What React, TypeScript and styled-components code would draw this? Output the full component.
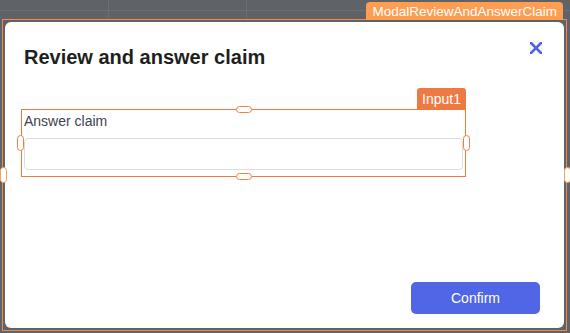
import React from "react";
import styled, { createGlobalStyle } from "styled-components";

const Global = createGlobalStyle`
  html, body { margin: 0; padding: 0; background: #5f6266; }
  * { box-sizing: border-box; }
`;

const Canvas = styled.div`
  width: 570px;
  height: 333px;
  overflow: hidden;
  padding: 19px 0 0 2px;
  font-family: "Liberation Sans", Arial, sans-serif;
  background-color: #5f6266;
  background-image:
    linear-gradient(#6b6e72, #6b6e72),
    linear-gradient(#6b6e72, #6b6e72),
    linear-gradient(#6b6e72, #6b6e72);
  background-size: 100% 1px, 1px 20px, 1px 20px;
  background-position: 0 10px, 108px 0, 246px 0;
  background-repeat: no-repeat;
`;

const Frame = styled.div`
  position: relative;
  width: 565px;
  height: 312px;
  border: 1px solid #f08a45;
  padding: 2px;
`;

const FrameTag = styled.div`
  position: absolute;
  right: 3px;
  bottom: 100%;
  height: 18px;
  line-height: 19px;
  padding: 0 6px;
  background: #ff9d50;
  color: #ffffff;
  font-size: 13.5px;
  border-radius: 4px 4px 0 0;
  white-space: nowrap;
`;

const Handle = styled.span<{ $side: "left" | "right" | "top" | "bottom"; $off: number }>`
  position: absolute;
  z-index: 2;
  background: #ffffff;
  border: 1.5px solid #f0803f;
  border-radius: 4px;
  ${(p) =>
    p.$side === "left" || p.$side === "right"
      ? `width: 7px; height: 16px; top: 50%; transform: translateY(-50%); ${p.$side}: ${p.$off}px;`
      : `width: 16px; height: 7px; left: 50%; transform: translateX(-50%); ${p.$side}: ${p.$off}px;`}
`;

const FrameHandle = styled(Handle)`
  border-color: #f6a160;
`;

const Modal = styled.div`
  width: 100%;
  height: 100%;
  background: #ffffff;
  border-radius: 6px;
  display: flex;
  flex-direction: column;
`;

const Header = styled.div`
  display: flex;
  align-items: flex-start;
  justify-content: space-between;
  padding: 23px 22px 0 19px;
`;

const Title = styled.h2`
  margin: 0;
  font-size: 20px;
  line-height: 24px;
  font-weight: 700;
  color: #1e1f21;
`;

const Close = styled.button`
  border: 0;
  background: none;
  padding: 0;
  margin-top: -3px;
  width: 12px;
  height: 12px;
  display: flex;
  cursor: pointer;
`;

const Body = styled.div`
  padding: 40px 0 0 16px;
`;

const Selection = styled.div`
  position: relative;
  width: 445px;
  border: 1px solid #ef7a3f;
  padding: 3px 2px 6px 2px;
`;

const SelTag = styled.div`
  position: absolute;
  right: -1px;
  bottom: 100%;
  height: 22px;
  line-height: 23px;
  padding: 0 5px;
  background: #ef7942;
  color: #ffffff;
  font-size: 14px;
  border-radius: 3px 3px 0 0;
`;

const Label = styled.label`
  display: block;
  font-size: 14px;
  line-height: 17px;
  color: #3d4350;
  margin-bottom: 8px;
`;

const Input = styled.input`
  display: block;
  width: 100%;
  height: 32px;
  border: 1px solid #dddddd;
  border-radius: 4px;
  outline: none;
  padding: 0 8px;
  font-family: inherit;
  font-size: 14px;
`;

const Footer = styled.div`
  margin-top: auto;
  display: flex;
  justify-content: flex-end;
  padding: 0 24px 14px 0;
`;

const Confirm = styled.button`
  width: 129px;
  height: 32px;
  border: 0;
  border-radius: 5px;
  background: #5166e6;
  color: #ffffff;
  font-family: inherit;
  font-size: 14px;
  cursor: pointer;
`;

export default function App() {
  return (
    <>
      <Global />
      <Canvas>
        <Frame>
          <FrameTag>ModalReviewAndAnswerClaim</FrameTag>
          <FrameHandle $side="left" $off={-3} />
          <FrameHandle $side="right" $off={-5} />
          <Modal>
            <Header>
              <Title>Review and answer claim</Title>
              <Close aria-label="Close">
                <svg width="12" height="12" viewBox="0 0 12 12">
                  <path d="M1 1 L11 11 M11 1 L1 11" stroke="#5264e3" strokeWidth="2.6" strokeLinecap="round" />
                </svg>
              </Close>
            </Header>
            <Body>
              <Selection>
                <SelTag>Input1</SelTag>
                <Handle $side="top" $off={-4} />
                <Handle $side="bottom" $off={-4} />
                <Handle $side="left" $off={-5} />
                <Handle $side="right" $off={-5} />
                <Label>Answer claim</Label>
                <Input />
              </Selection>
            </Body>
            <Footer>
              <Confirm>Confirm</Confirm>
            </Footer>
          </Modal>
        </Frame>
      </Canvas>
    </>
  );
}
